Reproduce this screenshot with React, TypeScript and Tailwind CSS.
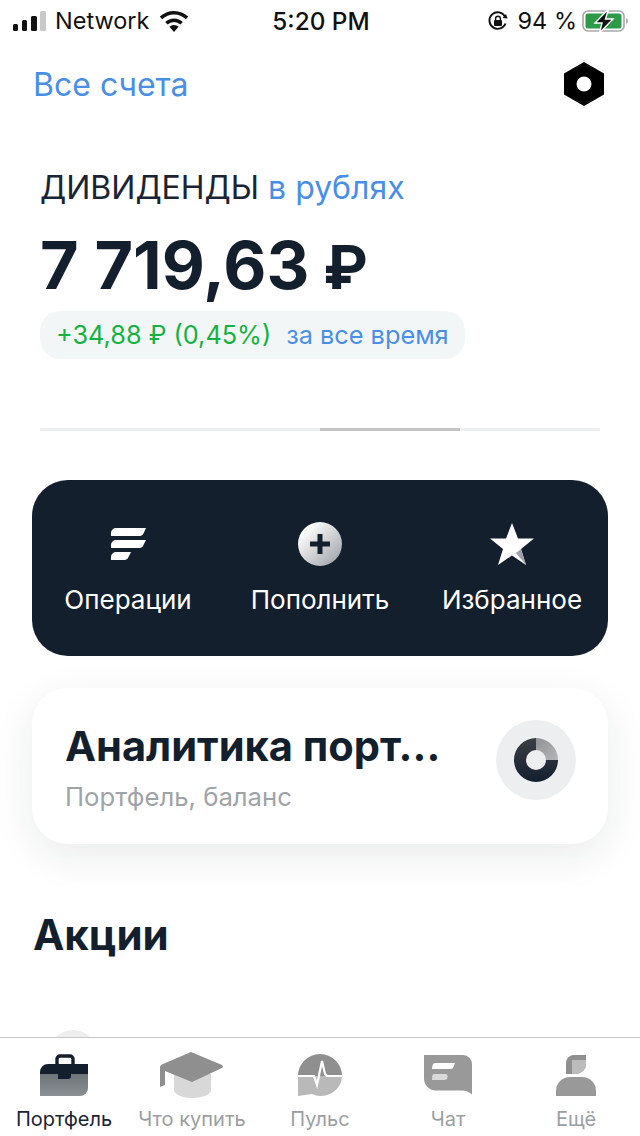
import React from 'react';

const SignalIcon = () => (
  <svg width="34" height="20" viewBox="0 0 34 20">
    <rect x="0" y="13" width="5" height="7" rx="1.5" fill="#111" />
    <rect x="9" y="9" width="5" height="11" rx="1.5" fill="#111" />
    <rect x="18" y="5" width="6" height="15" rx="1.5" fill="#111" />
    <rect x="27" y="0" width="6" height="20" rx="1.5" fill="#c9c9c9" />
  </svg>
);

const WifiIcon = () => (
  <svg width="30" height="22" viewBox="0 0 30 22">
    <path d="M15 22l-4.600-5.200a6.600 6.600 0 0 1 9.200 0z" fill="#111" />
    <path d="M15 8.400c3.400 0 6.500 1.300 8.800 3.500l-2.400 2.700a9.300 9.300 0 0 0-12.800 0l-2.400-2.700A12.800 12.800 0 0 1 15 8.400z" fill="#111" />
    <path d="M15 1c5.500 0 10.500 2.100 14.200 5.600l-2.400 2.700A17.200 17.200 0 0 0 15 4.600 17.200 17.200 0 0 0 3.200 9.300L.8 6.600A20.600 20.600 0 0 1 15 1z" fill="#111" />
  </svg>
);

const RotationLockIcon = () => (
  <svg width="22" height="22" viewBox="0 0 22 22">
    <path d="M18.500 13.500A8.300 8.300 0 1 1 18 6.500" fill="none" stroke="#111" strokeWidth="1.900" />
    <path d="M20.600 8.600l-5-.6 3.400-3.900z" fill="#111" />
    <rect x="7" y="10" width="8" height="6" rx="1" fill="#111" />
    <path d="M8.600 10V8.600a2.400 2.400 0 0 1 4.800 0V10" fill="none" stroke="#111" strokeWidth="1.400" />
  </svg>
);

const BatteryIcon = () => (
  <svg width="47" height="24" viewBox="0 0 47 24">
    <rect x="1" y="2" width="41" height="20" rx="5" fill="none" stroke="#a9a9a9" strokeWidth="1.600" />
    <rect x="3.500" y="4.500" width="36" height="15" rx="2.500" fill="#2c9a48" />
    <path d="M44 9c1.400.4 2 1.600 2 3s-.6 2.600-2 3z" fill="#b5b5b5" />
    <path d="M26.500 0L13 14h7l-2.500 10L31 10h-7.500z" fill="#111" stroke="#fff" strokeWidth="1.400" />
  </svg>
);

const NutIcon = () => (
  <svg width="42" height="44" viewBox="0 0 42 44">
    <path fillRule="evenodd" d="M21 0l20 11.500v21L21 44 1 32.500v-21zM21 14.500a7.500 7.500 0 1 0 0 15 7.500 7.500 0 0 0 0-15z" fill="#000" />
  </svg>
);

const OperationsIcon = () => (
  <svg width="36" height="34" viewBox="0 0 36 34">
    <path d="M6 1H36L33.500 6.500A4 4 0 0 1 30 9H1V6A5 5 0 0 1 6 1z" fill="#fff" />
    <path d="M6 13H36L33.500 18A4 4 0 0 1 30 21H1V18A5 5 0 0 1 6 13z" fill="#fff" />
    <path d="M6 25H21L18.500 30A4 4 0 0 1 15 33H1V30A5 5 0 0 1 6 25z" fill="#fff" />
  </svg>
);

const PlusCircleIcon = () => (
  <svg width="44" height="44" viewBox="0 0 44 44">
    <defs>
      <linearGradient id="plusGrad" x1="0.150" y1="0.150" x2="0.900" y2="0.900">
        <stop offset="0" stopColor="#ffffff" />
        <stop offset="1" stopColor="#a4a8ad" />
      </linearGradient>
    </defs>
    <circle cx="22" cy="22" r="22" fill="url(#plusGrad)" />
    <path d="M19.500 12h5v7.500H32v5h-7.500V32h-5v-7.500H12v-5h7.500z" fill="#141f2e" />
  </svg>
);

const StarIcon = () => (
  <svg width="44" height="42" viewBox="0 0 44 42">
    <path d="M22 0l6 15.500h16L31 26l5 16-14-9.500L8 42l5-16L0 15.500h16z" fill="#fff" />
    <path d="M31 26l5 16-10-12z" fill="#9ea2a7" />
  </svg>
);

const DonutIcon = () => (
  <svg width="44" height="44" viewBox="0 0 44 44">
    <defs>
      <linearGradient id="donutGrad" x1="0" y1="0" x2="0" y2="1">
        <stop offset="0" stopColor="#3a3f45" />
        <stop offset="1" stopColor="#141f2e" />
      </linearGradient>
      <linearGradient id="donutLight" x1="0" y1="0" x2="1" y2="1">
        <stop offset="0" stopColor="#8f9295" />
        <stop offset="1" stopColor="#b4b6b8" />
      </linearGradient>
    </defs>
    <path fillRule="evenodd" d="M22 0a22 22 0 1 0 22 22H32a10 10 0 1 1-10-10z" fill="url(#donutGrad)" />
    <path d="M22 0a22 22 0 0 1 22 22H32a10 10 0 0 0-10-10z" fill="url(#donutLight)" />
  </svg>
);

const BriefcaseIcon = () => (
  <svg width="48" height="42" viewBox="0 0 48 42">
    <defs>
      <linearGradient id="caseGrad" x1="0" y1="0" x2="0" y2="1">
        <stop offset="0" stopColor="#6f7479" />
        <stop offset="1" stopColor="#8b9095" />
      </linearGradient>
    </defs>
    <path d="M17 11V5A3 3 0 0 1 20 2H30A3 3 0 0 1 33 5V11" fill="none" stroke="#141f2e" strokeWidth="3.400" />
    <path d="M0 20H48V34A8 8 0 0 1 40 42H0z" fill="url(#caseGrad)" />
    <path d="M8 10H48V20H31V22A3 3 0 0 1 28 25H18V20H0V18A8 8 0 0 1 8 10z" fill="#141f2e" />
  </svg>
);

const CapIcon = () => (
  <svg width="64" height="46" viewBox="0 0 64 46">
    <path d="M14 22H51V38C51 43 41 46 32.500 46S14 43 14 38z" fill="#d8d8d8" />
    <path d="M31 0L62 13A2 2 0 0 1 62 16L32 30L5 19V33L0 35V16A4 4 0 0 1 3 12z" fill="#8f8f8f" />
  </svg>
);

const PulseIcon = () => (
  <svg width="44" height="42" viewBox="0 0 44 42">
    <path d="M0 22A22 22 0 0 1 44 22z" fill="#8f8f8f" />
    <path d="M0 22H44A22 20 0 0 1 22 42C19 42 17 41 14 40L0 42z" fill="#b9b9b9" />
    <path d="M0 22H16L19 31L24 7L27 20L29 22H44" fill="none" stroke="#fff" strokeWidth="2.200" />
  </svg>
);

const ChatIcon = () => (
  <svg width="48" height="40" viewBox="0 0 48 40">
    <path d="M0 0h39a9 9 0 0 1 9 9v30.500c-3-2.500-6-4-10-4H12A12 12 0 0 1 0 23.500z" fill="#999" />
    <path d="M11 8h20l-1.500 4a3 3 0 0 1-3 2H8l.5-3.500A3 3 0 0 1 11 8z" fill="#fff" />
    <path d="M10 19h12a1.500 1.500 0 0 1 1.500 1.500v2a3 3 0 0 1-3 2.500H8l.3-4A2 2 0 0 1 10 19z" fill="#d9d9d9" />
  </svg>
);

const UserIcon = () => (
  <svg width="40" height="41" viewBox="0 0 40 41">
    <path d="M18 0H30V9A10 10 0 0 1 20 19H10V8A8 8 0 0 1 18 0z" fill="#8f8f8f" />
    <path d="M16 5H30V9A10 10 0 0 1 20 19H16z" fill="#bcbcbc" />
    <path d="M14 22H26A14 14 0 0 1 40 36V41H0V36A14 14 0 0 1 14 22z" fill="#999" />
  </svg>
);

const quickActions = [
  { label: 'Операции', icon: <OperationsIcon /> },
  { label: 'Пополнить', icon: <PlusCircleIcon /> },
  { label: 'Избранное', icon: <StarIcon /> },
];

const tabs = [
  { label: 'Портфель', icon: <BriefcaseIcon />, active: true },
  { label: 'Что купить', icon: <CapIcon />, active: false },
  { label: 'Пульс', icon: <PulseIcon />, active: false },
  { label: 'Чат', icon: <ChatIcon />, active: false },
  { label: 'Ещё', icon: <UserIcon />, active: false },
];

const App: React.FC = () => {
  return (
    <div className="w-[640px] h-[1136px] overflow-hidden bg-white flex flex-col font-['Inter',sans-serif]">
      <div className="flex-1 overflow-hidden">
        {/* status bar */}
        <div className="h-[42px] pl-[13px] pr-[11px] grid grid-cols-3 items-center text-[23.500px] text-[#111]">
          <div className="flex items-center gap-[8px] whitespace-nowrap">
            <SignalIcon />
            <span>Network</span>
            <span className="ml-[2px]">
              <WifiIcon />
            </span>
          </div>
          <div className="text-center text-[24.300px] font-medium whitespace-nowrap">5:20 PM</div>
          <div className="flex items-center justify-end gap-[5px] whitespace-nowrap">
            <span className="mr-[4px]">
              <RotationLockIcon />
            </span>
            <span>94 %</span>
            <BatteryIcon />
          </div>
        </div>

        <div className="flex items-center justify-between pl-[33px] pr-[35px] mt-[20px] h-[44px]">
          <span className="pt-[2px] text-[32px] leading-[44px] text-[#4a8fe7]">Все счета</span>
          <NutIcon />
        </div>

        <div className="px-[40px] mt-[62px]">
          <div className="text-[32px] leading-[40px] whitespace-nowrap">
            <span className="text-[#1a2433]">ДИВИДЕНДЫ</span>{' '}
            <span className="text-[#4a8fe7]">в рублях</span>
          </div>
          <div className="mt-[18px] h-[78px] text-[66.500px] leading-[78px] font-bold text-[#141f2e] whitespace-nowrap">
            7 719,63 <span className="-ml-[2px] text-[60px]">₽</span>
          </div>
          <div className="mt-[7px] inline-flex items-center h-[48px] pl-[16px] pr-[16px] gap-[15px] rounded-[20px] bg-[#f3f6f7] text-[25.300px] whitespace-nowrap">
            <span className="text-[#12b33f]">+34,88 ₽ (0,45%)</span>
            <span className="text-[#4a8fe7]">за все время</span>
          </div>
          <div className="mt-[69px] h-[3px] bg-[#eceeef] flex">
            <div className="ml-[280px] w-[140px] bg-[#c4c4c4]" />
          </div>
        </div>

        <div className="mx-[32px] mt-[49px] h-[176px] rounded-[36px] bg-[#141f2e] grid grid-cols-3">
          {quickActions.map((a) => (
            <div key={a.label} className="flex flex-col items-center pt-[42px]">
              <div className="h-[44px] flex items-center justify-center">{a.icon}</div>
              <div className="mt-[18px] text-[26px] leading-[32px] text-white whitespace-nowrap">{a.label}</div>
            </div>
          ))}
        </div>

        <div className="mx-[32px] mt-[32px] h-[156px] rounded-[36px] bg-white shadow-[0_12px_40px_rgba(20,31,46,0.09)] flex items-center justify-between pl-[33px] pr-[32px]">
          <div className="pt-[3px]">
            <div className="text-[41.600px] leading-[48px] font-bold text-[#141f2e] whitespace-nowrap">Аналитика порт...</div>
            <div className="mt-[11px] text-[25.700px] leading-[32px] text-[#9ea3a8]">Портфель, баланс</div>
          </div>
          <div className="mb-[12px] w-[80px] h-[80px] rounded-full bg-[#eceeef] flex items-center justify-center">
            <DonutIcon />
          </div>
        </div>

        <div className="pl-[33px] mt-[66px] text-[42px] leading-[50px] font-bold text-[#141f2e]">Акции</div>
        <div className="ml-[48px] mt-[70px] w-[50px] h-[50px] rounded-full bg-[#eeeeee]" />
      </div>

      <div className="h-[99px] shrink-0 border-t border-[#c8c8c8] bg-white grid grid-cols-5">
        {tabs.map((t) => (
          <div key={t.label} className="flex flex-col items-center">
            <div className="h-[56px] mt-[9px] flex items-center justify-center">{t.icon}</div>
            <div className={`mt-[4px] text-[20px] leading-[24px] whitespace-nowrap ${t.active ? 'text-[#1a2433]' : 'text-[#9b9fa3]'}`}>{t.label}</div>
          </div>
        ))}
      </div>
    </div>
  );
};

export default App;
